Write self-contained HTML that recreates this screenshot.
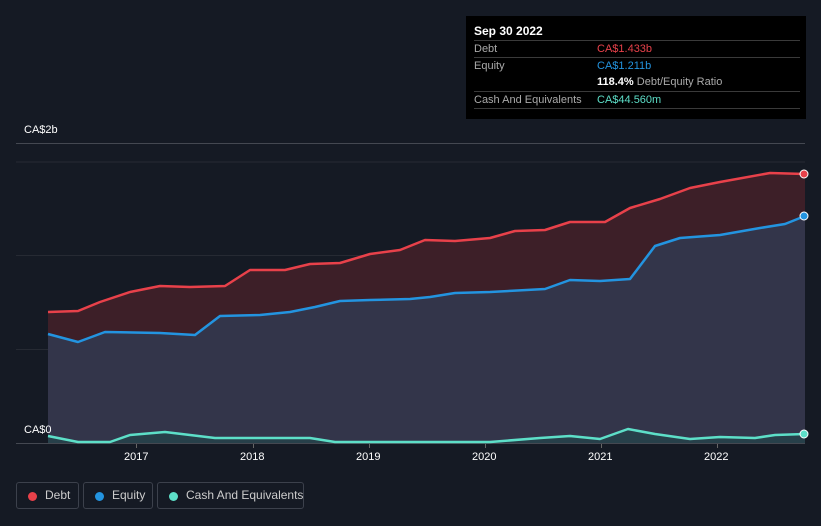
<!DOCTYPE html>
<html><head><style>
html,body{margin:0;height:526px}
body{background:#151a24;width:821px;overflow:hidden;font-family:"Liberation Sans",sans-serif;position:relative}
.tt{position:absolute;left:466px;top:16px;width:340px;height:103px;background:#000;}
.tt .h{position:absolute;left:8px;top:8px;color:#fff;font-size:12px;font-weight:bold}
.row{position:absolute;left:8px;width:326px;font-size:11px;color:#aaa;border-top:1px solid #3a3a3a;height:16px;line-height:16px;white-space:nowrap}
.row span{position:absolute;left:123px}
.lbl{position:absolute;color:#fff;font-size:11px}
.leg{position:absolute;top:482px;height:27px;border:1px solid #3c414c;border-radius:3px;color:#ccc;font-size:12px;line-height:25px;box-sizing:border-box;white-space:nowrap}
.leg i{position:absolute;left:11px;top:9px;width:9px;height:9px;border-radius:50%}
</style></head><body>
<svg width="821" height="526" style="position:absolute;left:0;top:0">
<line x1="16" y1="143.5" x2="805" y2="143.5" stroke="#444851"/>
<line x1="16" y1="162" x2="805" y2="162" stroke="#262a33"/>
<line x1="16" y1="255.5" x2="805" y2="255.5" stroke="#262a33"/>
<line x1="16" y1="349.5" x2="805" y2="349.5" stroke="#262a33"/>
<path d="M48,312 L78,311 100,302 130,292 160,286 190,287 225,286 250,270 285,270 310,264 340,263 370,254 400,250 425,240 455,241 490,238 515,231 545,230 570,222 605,222 630,208 660,199 690,188 720,182 770,173 805,174 L805,216 785,224 760,228 720,235 680,238 655,246 630,279 600,281 570,280 545,289 490,292 455,293 430,297 410,299 370,300 340,301 315,307 290,312 260,315 220,316 195,335 160,333 105,332 78,342 48,334Z" fill="#3d1f28"/>
<path d="M48,334 L78,342 105,332 160,333 195,335 220,316 260,315 290,312 315,307 340,301 370,300 410,299 430,297 455,293 490,292 545,289 570,280 600,281 630,279 655,246 680,238 720,235 760,228 785,224 805,216 L805,443 48,443Z" fill="#33354a"/>
<path d="M48,436 L78,442 110,442 130,435 165,432 190,435 215,438 250,438 310,438 335,442 370,442 490,442 540,438 570,436 600,439 628,429 655,434 690,439 720,437 755,438 775,435 805,434 L805,443 48,443Z" fill="#27404a"/>
<line x1="16" y1="443.5" x2="805" y2="443.5" stroke="#444851"/>
<polyline fill="none" stroke="#e8414a" stroke-width="2.5" stroke-linejoin="round" points="48,312 78,311 100,302 130,292 160,286 190,287 225,286 250,270 285,270 310,264 340,263 370,254 400,250 425,240 455,241 490,238 515,231 545,230 570,222 605,222 630,208 660,199 690,188 720,182 770,173 805,174"/>
<polyline fill="none" stroke="#2394e0" stroke-width="2.5" stroke-linejoin="round" points="48,334 78,342 105,332 160,333 195,335 220,316 260,315 290,312 315,307 340,301 370,300 410,299 430,297 455,293 490,292 545,289 570,280 600,281 630,279 655,246 680,238 720,235 760,228 785,224 805,216"/>
<polyline fill="none" stroke="#5ddfc8" stroke-width="2.5" stroke-linejoin="round" points="48,436 78,442 110,442 130,435 165,432 190,435 215,438 250,438 310,438 335,442 370,442 490,442 540,438 570,436 600,439 628,429 655,434 690,439 720,437 755,438 775,435 805,434"/>
<circle cx="804" cy="174" r="4" fill="#e8414a" stroke="#fff" stroke-width="1"/>
<circle cx="804" cy="216" r="4" fill="#2394e0" stroke="#fff" stroke-width="1"/>
<circle cx="804" cy="434" r="4" fill="#5ddfc8" stroke="#fff" stroke-width="1"/>
<g stroke="#666" ><line x1="136.5" y1="444" x2="136.5" y2="448"/><line x1="253.5" y1="444" x2="253.5" y2="448"/><line x1="369.5" y1="444" x2="369.5" y2="448"/><line x1="485.5" y1="444" x2="485.5" y2="448"/><line x1="601.5" y1="444" x2="601.5" y2="448"/><line x1="717.5" y1="444" x2="717.5" y2="448"/></g>
</svg>
<div class="lbl" style="left:24px;top:124px">CA$2b</div>
<div class="lbl" style="left:24px;top:424px">CA$0</div>
<div class="lbl" style="left:124px;top:451px">2017</div>
<div class="lbl" style="left:240px;top:451px">2018</div>
<div class="lbl" style="left:356px;top:451px">2019</div>
<div class="lbl" style="left:472px;top:451px">2020</div>
<div class="lbl" style="left:588px;top:451px">2021</div>
<div class="lbl" style="left:704px;top:451px">2022</div>
<div class="tt">
<div class="h">Sep 30 2022</div>
<div class="row" style="top:24px">Debt<span style="color:#e8414a">CA$1.433b</span></div>
<div class="row" style="top:41px">Equity<span style="color:#2394e0">CA$1.211b</span></div>
<div class="row" style="top:58px;border-top:none"><span><b style="color:#fff">118.4%</b> Debt/Equity Ratio</span></div>
<div class="row" style="top:75px">Cash And Equivalents<span style="color:#5ddfc8">CA$44.560m</span></div>
<div class="row" style="top:92px;height:0"></div>
</div>
<div class="leg" style="left:16px;width:63px"><i style="background:#e8414a"></i><span style="position:absolute;left:28px">Debt</span></div>
<div class="leg" style="left:83px;width:70px"><i style="background:#2394e0"></i><span style="position:absolute;left:28px">Equity</span></div>
<div class="leg" style="left:157px;width:147px"><i style="background:#5ddfc8"></i><span style="position:absolute;left:28px">Cash And Equivalents</span></div>
</body></html>
